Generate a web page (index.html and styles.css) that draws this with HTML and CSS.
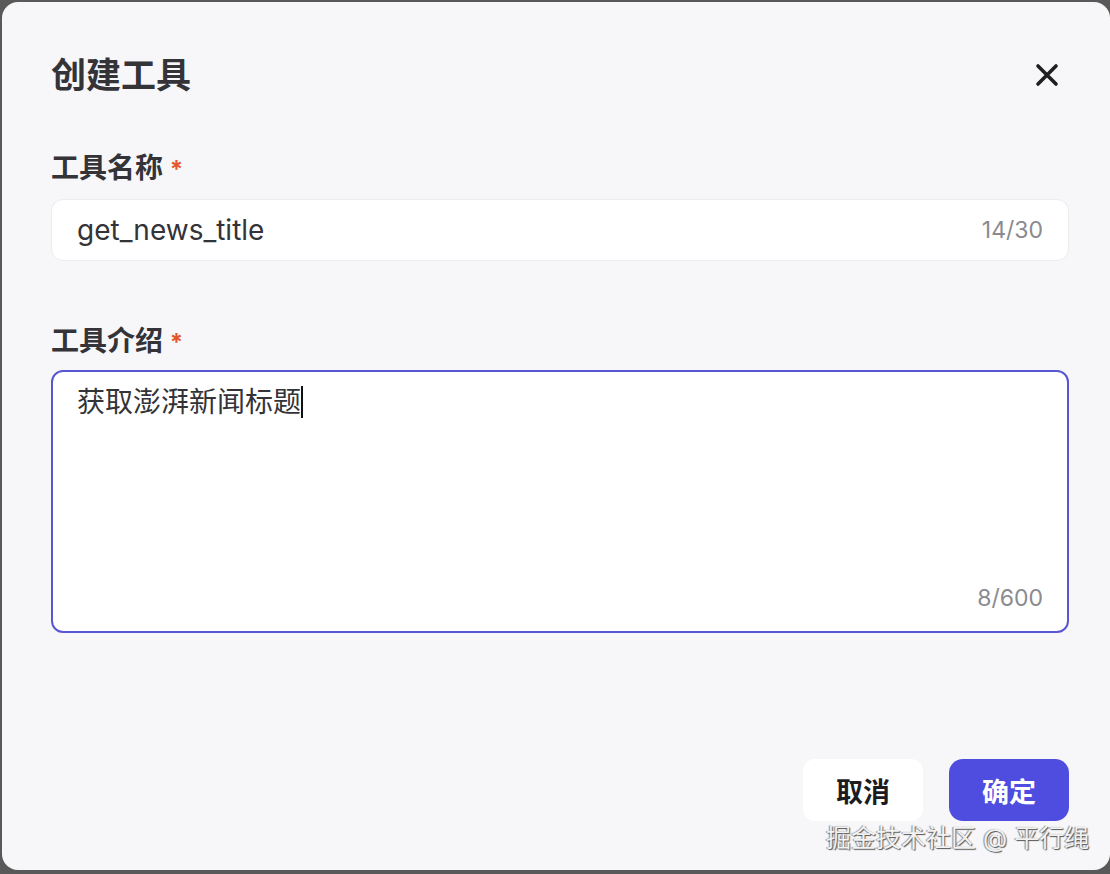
FILE: index.html
```html
<!DOCTYPE html>
<html lang="zh-CN">
<head>
    <meta charset="UTF-8">
    <meta name="viewport" content="width=device-width, initial-scale=1.0">
    <title>创建工具</title>
    <link rel="stylesheet" href="styles.css">
</head>
<body>
    <div class="modal">
        <div class="modal-header">
            <h1>创建工具</h1>
            <button class="close" aria-label="关闭">
                <svg width="24" height="24" viewBox="0 0 24 24">
                    <path d="M3 3 L21 21 M21 3 L3 21" stroke="#1f1f22" stroke-width="3.6" stroke-linecap="round"/>
                </svg>
            </button>
        </div>

        <div class="field name-field">
            <label>工具名称 <span class="required">*</span></label>
            <div class="input">
                <span class="value">get_news_title</span>
                <span class="count">14/30</span>
            </div>
        </div>

        <div class="field desc-field">
            <label>工具介绍 <span class="required">*</span></label>
            <div class="textarea">
                <span class="value">获取澎湃新闻标题<span class="caret"></span></span>
                <span class="count">8/600</span>
            </div>
        </div>

        <div class="modal-footer">
            <button class="btn cancel">取消</button>
            <button class="btn confirm">确定</button>
        </div>
    </div>

    <div class="watermark">掘金技术社区 @ 平行绳</div>
</body>
</html>
```

FILE: styles.css
```css
body {
    margin: 0;
    padding: 0;
    background: #595959;
    font-family: Inter, 'Noto Sans CJK SC', sans-serif;
    color: #333338;
    overflow: hidden;
}

.modal {
    margin: 2px 0 0 2px;
    width: 1108px;
    height: 868px;
    box-sizing: border-box;
    padding: 51px 41px 49px 49px;
    background: #f7f7f9;
    border-radius: 16px;
    display: flex;
    flex-direction: column;
}

.modal-header {
    display: flex;
    align-items: center;
    justify-content: space-between;
    height: 44px;
}

.modal-header h1 {
    margin: 0;
    font-size: 35px;
    font-weight: 700;
    line-height: 44px;
    color: #333338;
}

.close {
    border: none;
    background: none;
    padding: 0;
    width: 24px;
    height: 24px;
    margin-right: 10px;
    cursor: pointer;
}

.field label {
    display: block;
    font-size: 28px;
    font-weight: 700;
    line-height: 36px;
    height: 36px;
    color: #333338;
}

.required {
    color: #e4572e;
    font-size: 24px;
}

.name-field {
    margin-top: 53px;
}

.desc-field {
    margin-top: 62px;
}

.input {
    margin-top: 13px;
    height: 62px;
    box-sizing: border-box;
    background: #fff;
    border: 1px solid #ececf0;
    border-radius: 12px;
    padding: 0 25px;
    display: flex;
    align-items: center;
    justify-content: space-between;
}

.value {
    font-size: 28px;
    color: #333338;
}

.count {
    font-size: 23px;
    color: #8a8a8f;
}

.textarea {
    margin-top: 11px;
    height: 263px;
    box-sizing: border-box;
    background: #fff;
    border: 2px solid #5956d3;
    border-radius: 12px;
    padding: 10px 24px 19px 24px;
    display: flex;
    flex-direction: column;
    justify-content: space-between;
}

.textarea .value {
    line-height: 40px;
}

.textarea .count {
    align-self: flex-end;
}

.caret {
    display: inline-block;
    width: 2px;
    height: 32px;
    background: #111;
    vertical-align: -6px;
}

.modal-footer {
    margin-top: auto;
    display: flex;
    justify-content: flex-end;
    gap: 26px;
}

.btn {
    width: 120px;
    height: 62px;
    border: none;
    font-family: inherit;
    font-size: 27px;
    font-weight: 700;
    cursor: pointer;
}

.cancel {
    background: #fff;
    color: #1c1c1f;
    border-radius: 12px;
}

.confirm {
    background: #4e4ddf;
    color: #fff;
    border-radius: 14px;
}

.watermark {
    position: absolute;
    left: 826px;
    top: 818px;
    font-size: 25px;
    color: #f2f2f2;
    text-shadow: 1px 1px 1px #555, -1px 0 1px #888;
    white-space: nowrap;
}
```
